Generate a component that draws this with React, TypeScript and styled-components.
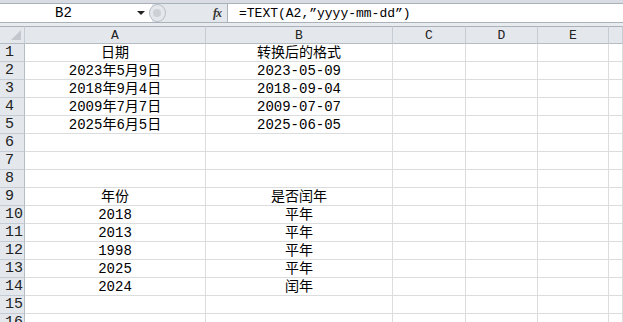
import React from "react";
import styled, { createGlobalStyle } from "styled-components";

const Global = createGlobalStyle`
  html, body { margin: 0; padding: 0; background: #fff; }
  body { font-family: "Liberation Mono", "Noto Sans CJK SC", monospace; }
`;

const Page = styled.div`
  width: 623px;
  height: 322px;
  overflow: hidden;
  background: #fff;
  display: flex;
  flex-direction: column;
`;

const TopStrip = styled.div`
  height: 3px;
  flex: none;
  background: #d9dde3;
`;

const FormulaBar = styled.div`
  flex: none;
  display: flex;
  border-top: 1px solid #a9b1bb;
  border-bottom: 1px solid #a9b1bb;
  box-sizing: border-box;
  height: 20px;
  background: #fff;
`;

const NameBox = styled.div`
  width: 152px;
  display: flex;
  align-items: center;
  font-size: 14px;
  color: #000;
  box-sizing: border-box;
`;

const NameText = styled.span`
  flex: 1;
  text-align: center;
  padding-right: 10px;
`;

const DropArrow = styled.span`
  width: 0;
  height: 0;
  border-left: 4px solid transparent;
  border-right: 4px solid transparent;
  border-top: 4px solid #222;
  margin-right: 7px;
`;

const FxArea = styled.div`
  width: 76px;
  background: #e4e7eb;
  border-right: 1px solid #a9b1bb;
  display: flex;
  align-items: center;
  justify-content: space-between;
  padding-right: 6px;
  box-sizing: border-box;
`;

const Knob = styled.div`
  width: 17px;
  height: 18px;
  border-radius: 50%;
  background: #e4e7eb;
  border: 1px solid #b8bec6;
  box-sizing: border-box;
  position: relative;
  margin-left: -3px;
  &::before {
    content: "";
    position: absolute;
    left: 3px;
    top: 4px;
    width: 8px;
    height: 8px;
    border-radius: 50%;
    background: #cdd1d6;
  }
`;

const Fx = styled.span`
  font-family: "Liberation Serif", serif;
  font-style: italic;
  font-weight: bold;
  font-size: 12px;
  color: #333;
  letter-spacing: -1px;
`;

const FormulaText = styled.div`
  flex: 1;
  padding-left: 11px;
  display: flex;
  align-items: center;
  font-size: 13px;
  color: #000;
`;

const Gap = styled.div`
  flex: none;
  height: 3px;
  background: #e9ecef;
`;

const Sheet = styled.div`
  display: grid;
  grid-template-columns: 25px 181px 187px 73px 72px 71px 1fr;
  grid-template-rows: 18px;
  grid-auto-rows: 18px;
`;

const ColHead = styled.div`
  background: #e4e8ed;
  border-right: 1px solid #c6ccd3;
  border-bottom: 1px solid #b5bcc4;
  border-top: 1px solid #a9b1bb;
  box-sizing: border-box;
  display: flex;
  align-items: center;
  justify-content: center;
  font-size: 13px;
  color: #222;
`;

const Corner = styled(ColHead)`
  position: relative;
  &::after {
    content: "";
    position: absolute;
    right: 3px;
    bottom: 3px;
    width: 0;
    height: 0;
    border-left: 10px solid transparent;
    border-bottom: 10px solid #c3c8ce;
  }
`;

const RowHead = styled.div`
  background: #e4e8ed;
  border-right: 1px solid #b5bcc4;
  border-bottom: 1px solid #c6ccd3;
  box-sizing: border-box;
  display: flex;
  align-items: flex-end;
  padding: 0 0 0 5px;
  font-size: 15px;
  line-height: 16px;
  color: #222;
`;

const Cell = styled.div`
  border-right: 1px solid #dadcdd;
  border-bottom: 1px solid #dadcdd;
  box-sizing: border-box;
  display: flex;
  align-items: flex-end;
  justify-content: center;
  font-size: 14px;
  line-height: 15px;
  color: #000;
  white-space: nowrap;
`;

const cols = ["A", "B", "C", "D", "E", ""];

const data: Record<number, [string, string]> = {
  1: ["日期", "转换后的格式"],
  2: ["2023年5月9日", "2023-05-09"],
  3: ["2018年9月4日", "2018-09-04"],
  4: ["2009年7月7日", "2009-07-07"],
  5: ["2025年6月5日", "2025-06-05"],
  9: ["年份", "是否闰年"],
  10: ["2018", "平年"],
  11: ["2013", "平年"],
  12: ["1998", "平年"],
  13: ["2025", "平年"],
  14: ["2024", "闰年"],
};

export default function App() {
  const rows = Array.from({ length: 16 }, (_, i) => i + 1);
  return (
    <Page>
      <Global />
      <TopStrip />
      <FormulaBar>
        <NameBox>
          <NameText>B2</NameText>
          <DropArrow />
        </NameBox>
        <FxArea>
          <Knob />
          <Fx>fx</Fx>
        </FxArea>
        <FormulaText>=TEXT(A2,”yyyy-mm-dd”)</FormulaText>
      </FormulaBar>
      <Gap />
      <Sheet>
        <Corner />
        {cols.map((c, i) => (
          <ColHead key={i}>{c}</ColHead>
        ))}
        {rows.map((r) => (
          <React.Fragment key={r}>
            <RowHead>{r}</RowHead>
            <Cell>{data[r]?.[0] ?? ""}</Cell>
            <Cell>{data[r]?.[1] ?? ""}</Cell>
            <Cell />
            <Cell />
            <Cell />
            <Cell />
          </React.Fragment>
        ))}
      </Sheet>
    </Page>
  );
}
